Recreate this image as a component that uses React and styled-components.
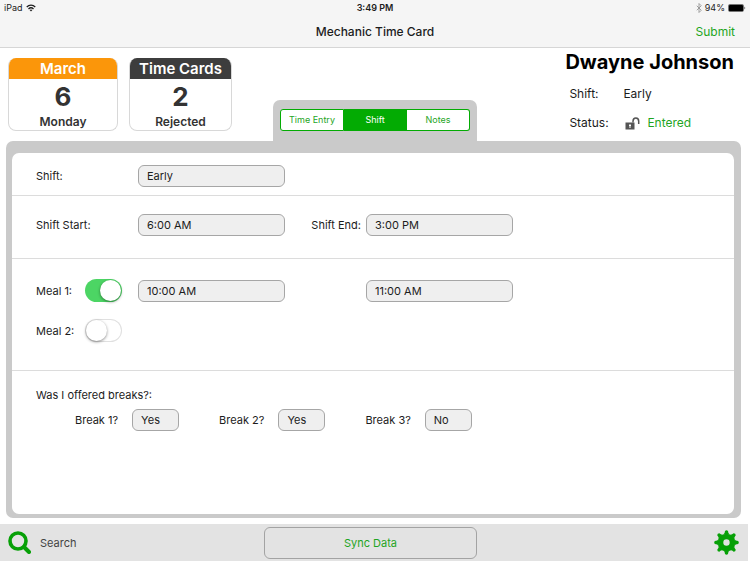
import { useState } from "react"
import styled, { createGlobalStyle } from "styled-components"

const GlobalStyle = createGlobalStyle`
    *{
        box-sizing: border-box;
    }

    body{
        margin: 0;
        background: #fff;
        color: #1c1c1c;
        font-family: Inter, "Liberation Sans", sans-serif;
        font-size: 11px;
        line-height: 16px;
    }

    button, input, select{
        font: inherit;
        color: inherit;
    }

    h1, h2, p{
        margin: 0;
    }
`

const Page = styled.div`
    min-height: 100vh;
    display: flex;
    flex-direction: column;
`

const Header = styled.header`
    background: #f5f5f5;
    border-bottom: 1px solid #d6d6d6;
`

const ThreeColumns = styled.div`
    display: grid;
    grid-template-columns: 1fr auto 1fr;
    align-items: center;
`

const StatusBar = styled(ThreeColumns)`
    height: 16px;
    padding: 0 4px;
    font-size: 9px;

    strong{
        font-weight: 600;
    }
`

const StatusGroup = styled.div`
    display: flex;
    align-items: center;
    gap: 3px;
    justify-content: ${({ $end }) => ($end ? "flex-end" : "flex-start")};
`

const NavBar = styled(ThreeColumns)`
    height: 31px;
    padding: 0 15px;
    font-size: 12px;

    h1{
        grid-column: 2;
        font-size: 12px;
        font-weight: 500;
    }
`

const SubmitButton = styled.button`
    justify-self: end;
    padding: 0;
    border: none;
    background: transparent;
    color: #1fa51f;
    cursor: pointer;
`

const Summary = styled.section`
    display: grid;
    grid-template-columns: 1fr auto 1fr;
    min-height: 93px;
`

const Cards = styled.div`
    display: flex;
    align-items: flex-start;
    gap: 11px;
    padding: 10px 0 0 8px;
`

const Card = styled.article`
    width: ${({ $wide }) => ($wide ? "110px" : "103px")};
    height: 73px;
    border: 1px solid #d8d8d8;
    border-top: none;
    border-radius: 8px;
    overflow: hidden;
    text-align: center;
    font-size: 12px;
    font-weight: 600;
    color: #333;

    h2{
        margin: 0 -1px;
        background: ${({ $color }) => $color};
        color: #fff;
        font-size: 15px;
        font-weight: 600;
        line-height: 21px;
    }

    strong{
        display: block;
        font-size: 26px;
        font-weight: 700;
        line-height: 36px;
    }

    p{
        line-height: 14px;
    }
`

const Tabs = styled.nav`
    align-self: end;
    display: flex;
    width: 204px;
    height: 41px;
    padding: 9px 7px 10px;
    background: #cacaca;
    border-radius: 7px 7px 0 0;
`

const Tab = styled.button`
    flex: 1;
    padding: 0;
    border: 1px solid #03ab03;
    border-left-width: ${({ $first }) => ($first ? "1px" : "0")};
    border-radius: ${({ $first, $last }) => `${$first ? 3 : 0}px ${$last ? 3 : 0}px ${$last ? 3 : 0}px ${$first ? 3 : 0}px`};
    background: ${({ $active }) => ($active ? "#03ab03" : "#fff")};
    color: ${({ $active }) => ($active ? "#fff" : "#1fa51f")};
    font-size: 9px;
    cursor: pointer;
`

const Employee = styled.div`
    justify-self: end;
    padding: 2px 16px 0 0;

    h2{
        color: #000;
        font-size: 20px;
        font-weight: 700;
        line-height: 24px;
    }
`

const EmployeeLine = styled.div`
    display: grid;
    grid-template-columns: 54px 1fr;
    align-items: center;
    padding-left: 4px;
    margin-top: ${({ $gap }) => $gap};
    font-size: 12px;
`

const Status = styled.span`
    display: flex;
    align-items: center;
    gap: 7px;
    padding-left: 2px;
    color: #1fa51f;
`

const Panel = styled.main`
    flex: 1;
    display: flex;
    margin: 0 9px 6px 6px;
    padding: 12px 7px 4px 6px;
    background: #cacaca;
    border-radius: 7px;
`

const Sheet = styled.form`
    flex: 1;
    background: #fff;
    border-radius: 7px;
`

const Section = styled.section`
    display: flex;
    flex-direction: column;
    gap: ${({ $gap }) => $gap || "0"};
    padding: ${({ $padding }) => $padding};
    border-bottom: ${({ $last }) => ($last ? "none" : "1px solid #dcdcdc")};
`

const Row = styled.div`
    display: grid;
    grid-template-columns: 102px 147px 81px 147px;
    align-items: center;
`

const EndLabel = styled.label`
    padding-right: 5px;
    text-align: right;
`

const Field = styled.input`
    width: 100%;
    height: 22px;
    padding: 0 8px;
    border: 1px solid #a6a6a6;
    border-radius: 6px;
    background: #efefef;
    appearance: none;
`

const MealLabel = styled.label`
    display: grid;
    grid-template-columns: 49px auto;
    justify-content: start;
    align-items: center;
`

const Toggle = styled.input`
    appearance: none;
    width: 37px;
    height: 23px;
    margin: 0;
    padding: 1px;
    border-radius: 12px;
    background: #fff;
    box-shadow: inset 0 0 0 1px #e0e0e0;
    cursor: pointer;

    &::before{
        content: "";
        display: block;
        width: 21px;
        height: 21px;
        border-radius: 50%;
        background: #fff;
        box-shadow: 0 1px 3px rgba(0, 0, 0, 0.45);
    }

    &:checked{
        background: #4cd564;
        box-shadow: none;
    }

    &:checked::before{
        margin-left: 14px;
    }
`

const Breaks = styled.div`
    display: flex;
    gap: 40px;
    padding-left: 39px;
`

const BreakItem = styled.div`
    display: grid;
    grid-template-columns: 1fr 47px;
    align-items: center;
    gap: 14px;
`

const Footer = styled.footer`
    display: grid;
    grid-template-columns: 1fr auto 1fr;
    align-items: center;
    height: 37px;
    margin: 0 2px 1px 0;
    padding: 0 9px 0 2px;
    background: #e3e3e3;
`

const IconButton = styled.button`
    justify-self: ${({ $end }) => ($end ? "end" : "start")};
    display: flex;
    align-items: center;
    gap: 9px;
    padding: ${({ $end }) => ($end ? "0" : "0 6px")};
    border: none;
    background: transparent;
    color: #444;
    cursor: pointer;

    svg{
        color: #07a007;
    }
`

const SyncButton = styled.button`
    width: 213px;
    height: 32px;
    border: 1px solid #a3a3a3;
    border-radius: 6px;
    background: #e3e3e3;
    color: #1fa51f;
    cursor: pointer;
`

const WifiIcon = () => (
    <svg width="10" height="8" viewBox="0 0 20 16" fill="none" stroke="#1c1c1c" strokeWidth="2.6">
        <path d="M1.5 6C6.2 1.2 13.8 1.2 18.5 6" />
        <path d="M5 10C7.8 7.2 12.2 7.2 15 10" />
        <path d="M7.3 12.2C8.8 10.8 11.2 10.8 12.7 12.2L10 15Z" fill="#1c1c1c" stroke="none" />
    </svg>
)

const BluetoothIcon = () => (
    <svg width="6" height="10" viewBox="0 0 12 20" fill="none" stroke="#8c8c8c" strokeWidth="1.6">
        <path d="M1.5 5.5L10.5 14.5L6 19V1L10.5 5.5L1.5 14.5" />
    </svg>
)

const BatteryIcon = () => (
    <svg width="18" height="8" viewBox="0 0 18 8">
        <rect x="0.5" y="0.5" width="15" height="7" rx="1.2" fill="#fff" stroke="#1c1c1c" strokeWidth="0.6" />
        <rect x="1" y="1" width="14" height="6" rx="0.6" fill="#000" />
        <path d="M16.5 2.5Q18 4 16.5 5.5Z" fill="#1c1c1c" />
    </svg>
)

const UnlockIcon = () => (
    <svg width="15" height="13" viewBox="0 0 15 13">
        <path fill="#555" fillRule="evenodd" d="M0.5 5.5H9.5V12.5H0.5ZM4 7.5V9H4.5V11H5.5V9H6V7.5Z" />
        <path d="M8 5.500V4.2C8 -0.2 13.7 -0.2 13.7 4.2V7" fill="none" stroke="#555" strokeWidth="1.5" />
    </svg>
)

const SearchIcon = () => (
    <svg width="23" height="23" viewBox="0 0 23 23" fill="none" stroke="currentColor">
        <circle cx="10" cy="10" r="8" strokeWidth="3.6" />
        <path d="M16 16L21 21" strokeWidth="4" strokeLinecap="round" />
    </svg>
)

const GearIcon = () => (
    <svg width="25" height="25" viewBox="-12.5 -12.5 25 25">
        <circle r="6" fill="none" stroke="currentColor" strokeWidth="5.6" />
        {[0, 45, 90, 135, 180, 225, 270, 315].map(angle => (
            <path
                key={angle}
                d="M-3.2 -8Q-1.6 -8.8 -1.5 -11.6Q0 -13 1.5 -11.6Q1.6 -8.8 3.2 -8Z"
                fill="currentColor"
                transform={`rotate(${angle})`}
            />
        ))}
    </svg>
)

const tabs = ["Time Entry", "Shift", "Notes"]

const breaks = [
    { id: 1, value: "Yes" },
    { id: 2, value: "Yes" },
    { id: 3, value: "No" },
]

const App = () => {
    const [tab, setTab] = useState("Shift")

    return <>
        <GlobalStyle />
        <Page>
            <Header>
                <StatusBar>
                    <StatusGroup><span>iPad</span><WifiIcon /></StatusGroup>
                    <strong>3:49 PM</strong>
                    <StatusGroup $end><BluetoothIcon /><span>94%</span><BatteryIcon /></StatusGroup>
                </StatusBar>
                <NavBar>
                    <h1>Mechanic Time Card</h1>
                    <SubmitButton type="button">Submit</SubmitButton>
                </NavBar>
            </Header>

            <Summary>
                <Cards>
                    <Card $color="#fb960a" $wide>
                        <h2>March</h2>
                        <strong>6</strong>
                        <p>Monday</p>
                    </Card>
                    <Card $color="#3d3d3d">
                        <h2>Time Cards</h2>
                        <strong>2</strong>
                        <p>Rejected</p>
                    </Card>
                </Cards>
                <Tabs>
                    {
                        tabs.map((name, i) => (
                            <Tab
                                key={name}
                                type="button"
                                $first={i === 0}
                                $last={i === tabs.length - 1}
                                $active={name === tab}
                                onClick={() => setTab(name)}
                            >{name}</Tab>
                        ))
                    }
                </Tabs>
                <Employee>
                    <h2>Dwayne Johnson</h2>
                    <EmployeeLine $gap="12px"><span>Shift:</span><span>Early</span></EmployeeLine>
                    <EmployeeLine $gap="13px">
                        <span>Status:</span>
                        <Status><UnlockIcon />Entered</Status>
                    </EmployeeLine>
                </Employee>
            </Summary>

            <Panel>
                <Sheet>
                    <Section $padding="12px 24px 8px">
                        <Row>
                            <label htmlFor="shift">Shift:</label>
                            <Field as="select" id="shift" defaultValue="Early">
                                <option>Early</option>
                            </Field>
                        </Row>
                    </Section>
                    <Section $padding="18px 24px 22px">
                        <Row>
                            <label htmlFor="start">Shift Start:</label>
                            <Field id="start" defaultValue="6:00 AM" />
                            <EndLabel htmlFor="end">Shift End:</EndLabel>
                            <Field id="end" defaultValue="3:00 PM" />
                        </Row>
                    </Section>
                    <Section $padding="20px 24px 28px" $gap="17px">
                        <Row>
                            <MealLabel>Meal 1:<Toggle type="checkbox" defaultChecked /></MealLabel>
                            <Field aria-label="Meal 1 start" defaultValue="10:00 AM" />
                            <span />
                            <Field aria-label="Meal 1 end" defaultValue="11:00 AM" />
                        </Row>
                        <Row>
                            <MealLabel>Meal 2:<Toggle type="checkbox" /></MealLabel>
                        </Row>
                    </Section>
                    <Section $padding="16px 24px" $gap="6px" $last>
                        <p>Was I offered breaks?:</p>
                        <Breaks>
                            {
                                breaks.map(({ id, value }) => (
                                    <BreakItem key={id}>
                                        <label htmlFor={`break-${id}`}>Break {id}?</label>
                                        <Field as="select" id={`break-${id}`} defaultValue={value}>
                                            <option>Yes</option>
                                            <option>No</option>
                                        </Field>
                                    </BreakItem>
                                ))
                            }
                        </Breaks>
                    </Section>
                </Sheet>
            </Panel>

            <Footer>
                <IconButton type="button"><SearchIcon />Search</IconButton>
                <SyncButton type="button">Sync Data</SyncButton>
                <IconButton type="button" aria-label="Settings" $end><GearIcon /></IconButton>
            </Footer>
        </Page>
    </>
}

export default App
